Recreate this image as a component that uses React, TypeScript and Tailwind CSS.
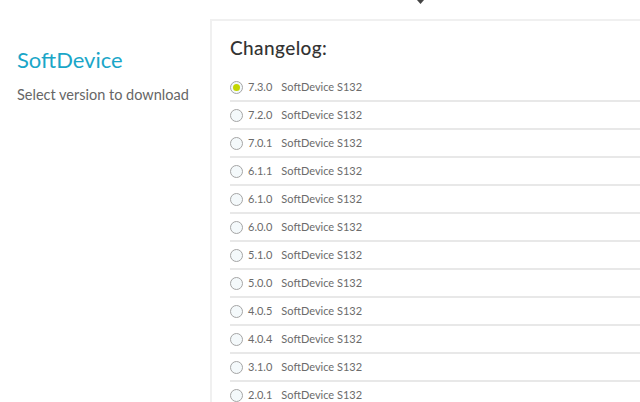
import React from 'react';

const versions = [
  '7.3.0',
  '7.2.0',
  '7.0.1',
  '6.1.1',
  '6.1.0',
  '6.0.0',
  '5.1.0',
  '5.0.0',
  '4.0.5',
  '4.0.4',
  '3.1.0',
  '2.0.1',
];

export default function App() {
  return (
    <div className="relative w-[640px] h-[402px] overflow-hidden bg-white" style={{ fontFamily: 'Lato, "Open Sans", sans-serif' }}>
      {/* Top dropdown caret */}
      <svg className="absolute left-[416px] top-0" width="9" height="5" viewBox="0 0 9 5">
        <path d="M1 0 L4.5 4 L8 0 Z" fill="#444" />
      </svg>

      <div className="flex">
        {/* Sidebar */}
        <div className="w-[210px] shrink-0 pl-[17px] pt-[46px]">
          <h1 className="text-[22px] leading-[28px] text-[#1aa6c8]">SoftDevice</h1>
          <p className="mt-[12px] text-[14.5px] leading-[18px] text-[#666]">Select version to download</p>
        </div>

        {/* Changelog panel */}
        <div className="flex-1 mt-[19px] h-[400px] border-l-2 border-t-2 border-[#f0f0f0] pl-[18px]">
          <h2 className="mt-[16px] text-[19px] leading-[22px] font-medium text-[#333] tracking-[0.4px]">Changelog:</h2>
          <ul className="mt-[15px]">
            {versions.map((v, i) => (
              <li key={v} className="flex items-center h-[28px] border-b-2 border-[#e8e8e8]">
                <span className="w-[13px] h-[13px] rounded-full border border-[#a5a5a5] bg-[#f4f9fb] flex items-center justify-center shrink-0">
                  {i === 0 && <span className="w-[7px] h-[7px] rounded-full bg-[#c3d600]" />}
                </span>
                <span className="ml-[5px] text-[11px] text-[#6b6b6b]">{v}</span>
                <span className="ml-[9px] text-[11px] text-[#6b6b6b]">SoftDevice S132</span>
              </li>
            ))}
          </ul>
        </div>
      </div>
    </div>
  );
}
